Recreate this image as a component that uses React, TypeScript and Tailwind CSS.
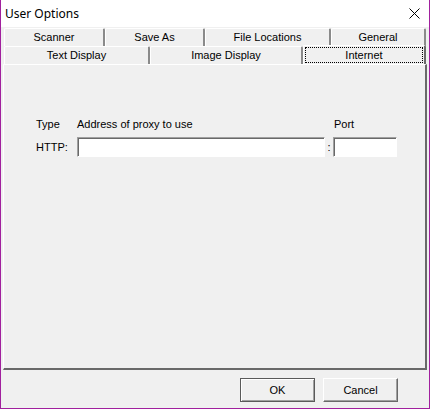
import { useState } from 'react'

const tabRow1 = [
  { label: 'Scanner', w: 'w-[101px]' },
  { label: 'Save As', w: 'w-[100px]' },
  { label: 'File Locations', w: 'w-[126px]' },
  { label: 'General', w: 'w-[95px]' },
]

const tabRow2 = [
  { label: 'Text Display', w: 'w-[146px]' },
  { label: 'Image Display', w: 'w-[153px]' },
  { label: 'Internet', w: 'w-[123px]' },
]

function Tab({ label, w, active }: { label: string; w: string; active?: boolean }) {
  if (active) {
    return (
      <div className={`${w} h-[19px] -mt-[1px] border-t border-l border-white border-r-2 border-r-[#696969] rounded-t-[2px] bg-[#f0f0f0] p-[1px]`}>
        <div className="h-full w-full border border-dotted border-black flex items-center justify-center leading-none">
          {label}
        </div>
      </div>
    )
  }
  return (
    <div className={`${w} h-[18px] border-t border-l border-white border-r-2 border-r-[#8a8a8a] rounded-t-[2px] bg-[#f0f0f0] flex items-center justify-center leading-none`}>
      {label}
    </div>
  )
}

function Sunken({ className }: { className: string }) {
  return (
    <input
      className={`${className} h-[20px] bg-white border border-t-[#a0a0a0] border-l-[#a0a0a0] border-r-white border-b-white shadow-[inset_1px_1px_0_#696969] outline-none px-1`}
    />
  )
}

export default function App() {
  const [tab] = useState('Internet')

  return (
    <div className="w-[430px] h-[409px] flex flex-col bg-[#f0f0f0] border-l border-r border-b border-[#a1209e] text-black text-[11px] font-['Liberation_Sans',Arial,sans-serif] overflow-hidden">
      <div className="h-[27px] bg-white flex items-center justify-between pl-[4px] pr-[9px] shrink-0">
        <span className="text-[12px] font-['Noto_Sans',sans-serif] text-black">User Options</span>
        <svg width="11" height="11" viewBox="0 0 11 11">
          <path d="M0.5 0.5 L10.5 10.5 M10.5 0.5 L0.5 10.5" stroke="#000" strokeWidth="1" />
        </svg>
      </div>

      <div className="flex flex-col flex-1 pt-[1px] px-[2px]">
        <div className="flex pl-[1px]">
          {tabRow1.map((t) => (
            <Tab key={t.label} label={t.label} w={t.w} />
          ))}
        </div>
        <div className="flex pl-[1px]">
          {tabRow2.map((t) => (
            <Tab key={t.label} label={t.label} w={t.w} active={t.label === tab} />
          ))}
        </div>

        <div className="h-[306px] w-[424px] border-t border-l border-white border-r-2 border-b-2 border-r-[#696969] border-b-[#696969] pt-[53px] pl-[32px]">
          <div className="grid grid-cols-[41px_248px_8px_64px] items-center gap-y-[6px]">
            <span className="leading-[13px]">Type</span>
            <span className="leading-[13px]">Address of proxy to use</span>
            <span />
            <span className="leading-[13px] pl-[1px]">Port</span>
            <span>HTTP:</span>
            <Sunken className="w-[248px]" />
            <span className="text-center">:</span>
            <Sunken className="w-[64px]" />
          </div>
        </div>

        <div className="flex justify-end gap-[8px] pr-[29px] pt-[8px]">
          <button className="w-[75px] h-[24px] bg-[#f0f0f0] border border-[#5a5a5a] shadow-[inset_1px_1px_0_#fff,inset_-1px_-1px_0_#a0a0a0] flex items-center justify-center">
            OK
          </button>
          <button className="w-[75px] h-[24px] bg-[#f0f0f0] border border-t-white border-l-white border-r-[#696969] border-b-[#696969] shadow-[inset_-1px_-1px_0_#a0a0a0] flex items-center justify-center">
            Cancel
          </button>
        </div>
      </div>
    </div>
  )
}
